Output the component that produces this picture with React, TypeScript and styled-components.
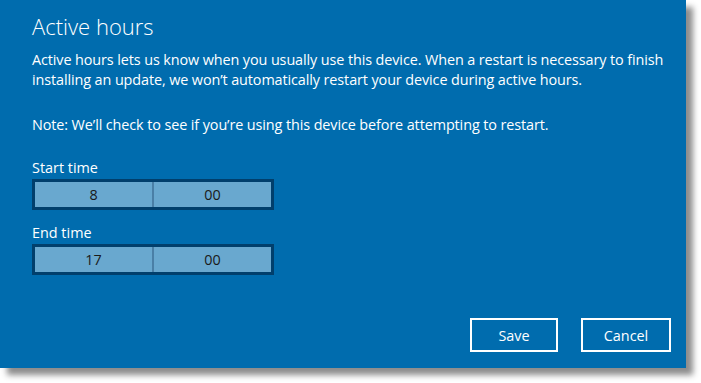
import styled, { createGlobalStyle } from "styled-components";

const GlobalStyle = createGlobalStyle`
  body {
    margin: 0;
    min-height: 383px;
    background: #ffffff;
    font-family: "Open Sans", "Noto Sans", sans-serif;
  }
`;

const Dialog = styled.div`
  box-sizing: border-box;
  width: 686px;
  height: 368px;
  background: #006cae;
  color: #ffffff;
  padding: 10px 15px 16px 32px;
  display: flex;
  flex-direction: column;
  box-shadow: 7px 7px 6px rgba(0, 0, 0, 0.45);
`;

const Title = styled.h1`
  margin: 0;
  font-weight: 300;
  font-size: 22px;
  line-height: 32px;
`;

const Para = styled.p`
  margin: 8px 0 0;
  font-size: 14.4px;
  line-height: 20px;
  letter-spacing: -0.1px;
  & + & {
    margin-top: 25px;
  }
`;

const Field = styled.div<{ $top: number }>`
  margin-top: ${(p) => p.$top}px;
  display: flex;
  flex-direction: column;
`;

const Label = styled.div`
  font-size: 14.4px;
  line-height: 20px;
  margin-bottom: 1px;
`;

const TimeBox = styled.div`
  box-sizing: border-box;
  width: 242px;
  height: 31px;
  border: 3px solid #013f6c;
  background: #69a8cf;
  display: grid;
  grid-template-columns: 1fr 2px 1fr;
`;

const Divider = styled.div`
  background: #4a7fa6;
`;

const Cell = styled.div`
  display: flex;
  align-items: center;
  justify-content: center;
  color: #1a1a1a;
  font-size: 14.4px;
`;

const Footer = styled.div`
  margin-top: auto;
  display: flex;
  justify-content: flex-end;
  gap: 23px;
`;

const Button = styled.button<{ $w: number }>`
  box-sizing: border-box;
  width: ${(p) => p.$w}px;
  height: 34px;
  background: transparent;
  border: 2px solid #ffffff;
  color: #ffffff;
  font-family: "Open Sans", "Noto Sans", sans-serif;
  font-size: 14.4px;
  padding: 0;
`;

const TimeField = ({ label, hour, top }: { label: string; hour: string; top: number }) => (
  <Field $top={top}>
    <Label>{label}</Label>
    <TimeBox>
      <Cell>{hour}</Cell>
      <Divider />
      <Cell>00</Cell>
    </TimeBox>
  </Field>
);

export default function App() {
  return (
    <>
      <GlobalStyle />
      <Dialog>
        <Title>Active hours</Title>
        <Para>
          Active hours lets us know when you usually use this device. When a restart is necessary to finish
          installing an update, we won’t automatically restart your device during active hours.
        </Para>
        <Para>Note: We’ll check to see if you’re using this device before attempting to restart.</Para>
        <TimeField label="Start time" hour="8" top={23} />
        <TimeField label="End time" hour="17" top={13} />
        <Footer>
          <Button $w={88}>Save</Button>
          <Button $w={90}>Cancel</Button>
        </Footer>
      </Dialog>
    </>
  );
}
